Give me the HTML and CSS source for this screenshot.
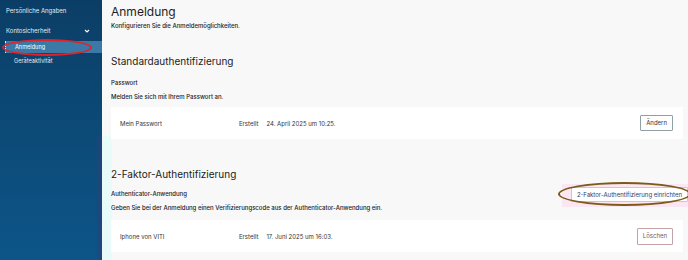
FILE: index.html
```html
<!DOCTYPE html>
<html lang="de">
<head>
<meta charset="utf-8">
<link rel="stylesheet" href="styles.css">
</head>
<body>
<div class="app">
  <aside class="sidebar">
    <div class="nav-item">Persönliche Angaben</div>
    <div class="nav-group">
      <span>Kontosicherheit</span>
      <svg class="chev" width="6" height="4" viewBox="0 0 6 4"><path d="M1 1l2 2 2-2" fill="none" stroke="#fff" stroke-width="1.1"/></svg>
    </div>
    <div class="sub-item active">Anmeldung<span class="ellipse red"></span></div>
    <div class="sub-item">Geräteaktivität</div>
  </aside>
  <main class="main">
    <h1>Anmeldung</h1>
    <p class="sub">Konfigurieren Sie die Anmeldemöglichkeiten.</p>

    <h2 class="sec">Standardauthentifizierung</h2>
    <div class="method">
      <div class="method-text">
        <div class="label">Passwort</div>
        <p class="desc">Melden Sie sich mit Ihrem Passwort an.</p>
      </div>
    </div>
    <div class="card">
      <span class="c-name">Mein Passwort</span>
      <span class="c-meta"><span class="c-key">Erstellt</span><span>24. April 2025 um 10:25.</span></span>
      <button class="btn">Ändern</button>
    </div>

    <h2 class="sec sec2">2-Faktor-Authentifizierung</h2>
    <div class="method">
      <div class="method-text">
        <div class="label">Authenticator-Anwendung</div>
        <p class="desc desc2">Geben Sie bei der Anmeldung einen Verifizierungscode aus der Authenticator-Anwendung ein.</p>
      </div>
      <span class="hl"><button class="btn btn-setup">2-Faktor-Authentifizierung einrichten</button><span class="ellipse brown"></span></span>
    </div>
    <div class="card card2">
      <span class="c-name">Iphone von VITI</span>
      <span class="c-meta"><span class="c-key">Erstellt</span><span>17. Juni 2025 um 16:03.</span></span>
      <button class="btn btn-del">Löschen</button>
    </div>
  </main>
</div>
</body>
</html>
```

FILE: styles.css
```css
* { box-sizing: border-box; }
html, body { margin: 0; padding: 0; }
body {
  width: 688px; height: 260px; overflow: hidden;
  font-family: "Inter", "Noto Sans", sans-serif;
  color: #222;
  background: #f8f8f8;
}
.app { display: flex; height: 260px; }
.sidebar {
  position: relative;
  width: 102px; flex: none;
  background: linear-gradient(180deg, #0b3e66 0%, #0c4b79 55%, #0d5588 100%);
  color: #e2ebf3;
  font-size: 6px;
  padding-top: 6px;
}
.sidebar::after {
  content: ""; position: absolute; right: 0; top: 136px; bottom: 0; width: 5px;
  background: #27437a; opacity: .7;
}
.nav-item { padding: 0 6px; height: 10px; line-height: 10px; }
.nav-group {
  margin-top: 10px; padding: 0 12px 0 6px; height: 10px; line-height: 10px;
  display: flex; justify-content: space-between; align-items: center;
}
.chev { display: block; }
.sub-item {
  position: relative;
  padding-left: 14px; height: 11px; line-height: 11px;
  font-size: 5.6px;
}
.sub-item.active {
  margin-top: 5px;
  background: #3b79a7;
  color: #fff;
  border-left: 1px dotted #dfe9f2;
  margin-left: 5px;
  padding-left: 9px;
  height: 12px; line-height: 12px;
}
.sub-item.active + .sub-item { margin-top: 3px; }
.ellipse { position: absolute; border-radius: 50%; pointer-events: none; }
.ellipse.red {
  left: -4px; top: -2px; width: 90px; height: 17px;
  border: 2px solid #e0222a;
}
.main { position: relative; flex: 1; min-width: 0; padding: 5px 5px 0 9px; }
.main::before {
  content: ""; position: absolute; left: 0; top: 136px; bottom: 0; width: 10px;
  background: #e9fbf8;
}
h1 { position: relative; font-size: 12px; font-weight: 400; margin: 0; line-height: 14px; color: #1d1d1d; }
.sub { font-size: 6px; font-weight: 500; margin: 3px 0 0; line-height: 8px; }
.sec { position: relative; font-size: 10px; font-weight: 400; margin: 25px 0 0; line-height: 12px; color: #222; }
.sec2 { margin-top: 29px; }
.method {
  position: relative;
  display: flex; justify-content: space-between; align-items: flex-start;
  margin-top: 12px;
}
.sec2 + .method { margin-top: 10px; }
.method-text { min-width: 0; }
.label { font-size: 6px; font-weight: 500; line-height: 8px; }
.desc { font-size: 6px; font-weight: 500; margin: 6px 0 0; line-height: 8px; }
.desc2 { margin-top: 6px; }
.card {
  position: relative;
  margin-top: 6px;
  background: #fff;
  height: 32px;
  display: flex; align-items: center;
  padding: 0 10px 0 9px;
  font-size: 6px;
  color: #333;
}
.card2 { margin-top: 8px; }
.c-name { width: 119px; }
.c-meta { flex: 1; display: flex; gap: 8px; }
.btn {
  font-family: inherit; font-size: 6px; color: #333;
  background: #fff; border: 1px solid #8fa1a6; border-radius: 1px;
  padding: 0 5px; height: 16px; line-height: 14px;
  white-space: nowrap;
}
.btn-del { border-color: #c4a3a8; color: #6e5b5e; height: 17px; }
.hl {
  position: relative;
  flex: none;
  background: #fbe6f4;
  padding: 3px 0 5px 9px;
  margin-right: -5px;
  margin-top: -6px;
  margin-bottom: -5px;
}
.btn-setup { display: block; border-color: #c6c9d6; color: #2f3b6a; padding: 0 5px; height: 15px; line-height: 13px; }
.ellipse.brown {
  left: -4px; top: -2px; width: 133px; height: 24px;
  border: 2px solid #7d5a17;
}
```
